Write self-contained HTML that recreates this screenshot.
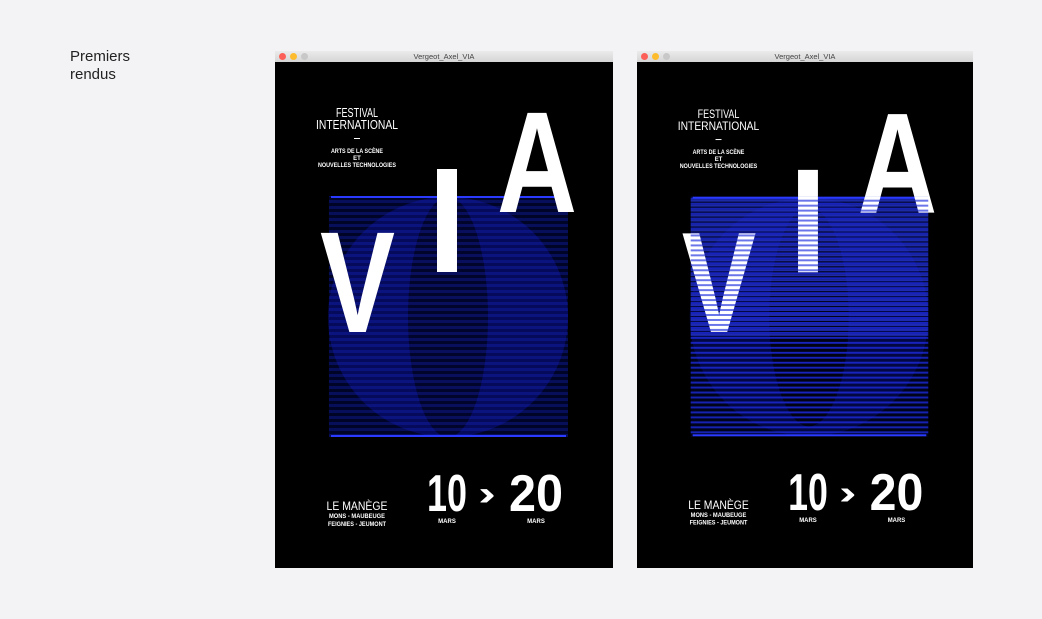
<!DOCTYPE html>
<html><head><meta charset="utf-8"><style>
html,body{margin:0;padding:0;background:#f3f3f5;width:1042px;height:619px;overflow:hidden;font-family:"Liberation Sans",sans-serif}
.lbl{position:absolute;left:70px;top:48px;font-size:15px;line-height:18px;color:#222}
.win{position:absolute;top:51px;height:517px;background:#000}
.bar{height:11px;background:linear-gradient(#ebebeb,#d5d5d5);position:relative;font-size:7.5px;line-height:11px;text-align:center;color:#444}
.d{position:absolute;top:2px;width:7px;height:7px;border-radius:50%}
svg{display:block}
</style></head><body>
<div class="lbl">Premiers<br>rendus</div>

<div class="win" style="left:275px;width:338px">
<div class="bar"><span class="d" style="left:4px;background:#fc5f57"></span><span class="d" style="left:15px;background:#fdbc2e"></span><span class="d" style="left:26px;background:#c8c8c8"></span>Vergeot_Axel_VIA</div>
<svg width="338" height="506" viewBox="0 0 338 506">
<defs>
<pattern id="st" width="10" height="6" patternUnits="userSpaceOnUse"><rect width="10" height="3" fill="#1a28d0" opacity="0.3"/></pattern>
<clipPath id="cc"><circle cx="173" cy="255" r="120"/></clipPath>
</defs>
<rect x="54" y="134" width="239" height="241" fill="#000528"/>
<circle cx="173" cy="255" r="120" fill="#0a129a" opacity="0.45"/>
<ellipse cx="173" cy="255" rx="40" ry="120" fill="#00041f" opacity="0.8" clip-path="url(#cc)"/>
<rect x="54" y="134" width="239" height="241" fill="url(#st)"/>
<rect x="56" y="134" width="235" height="2" fill="#2a3aff"/>
<rect x="56" y="373" width="235" height="2" fill="#2a3aff"/>
<g fill="#fff" font-family="'Liberation Sans',sans-serif" text-anchor="middle">
<text x="82" y="55" font-size="12.5" textLength="42" lengthAdjust="spacingAndGlyphs">FESTIVAL</text>
<text x="82" y="67" font-size="12.5" textLength="82" lengthAdjust="spacingAndGlyphs">INTERNATIONAL</text>
<rect x="79" y="76" width="6" height="1"/>
<text x="82" y="91" font-size="6" font-weight="bold" textLength="52" lengthAdjust="spacingAndGlyphs">ARTS DE LA SCÈNE</text>
<text x="82" y="98" font-size="6" font-weight="bold">ET</text>
<text x="82" y="105" font-size="6" font-weight="bold" textLength="78" lengthAdjust="spacingAndGlyphs">NOUVELLES TECHNOLOGIES</text>
<text x="82" y="448" font-size="12" textLength="61" lengthAdjust="spacingAndGlyphs">LE MANÈGE</text>
<text x="82" y="456" font-size="6.5" font-weight="bold" textLength="56" lengthAdjust="spacingAndGlyphs">MONS - MAUBEUGE</text>
<text x="82" y="464" font-size="6.5" font-weight="bold" textLength="58" lengthAdjust="spacingAndGlyphs">FEIGNIES - JEUMONT</text>
<text x="172" y="461" font-size="6" font-weight="bold">MARS</text>
<text x="261" y="461" font-size="6" font-weight="bold">MARS</text>
</g>
<g fill="#fff" font-family="'Liberation Sans',sans-serif" text-anchor="start">
<text x="152" y="449" font-size="52" font-weight="bold" textLength="40" lengthAdjust="spacingAndGlyphs">10</text>
<text x="203" y="443" font-size="34" font-weight="bold" textLength="18" lengthAdjust="spacingAndGlyphs">›</text>
<text x="234" y="449" font-size="52" font-weight="bold" textLength="54" lengthAdjust="spacingAndGlyphs">20</text>
<text x="45" y="270" font-size="144" font-weight="bold" textLength="75" lengthAdjust="spacingAndGlyphs">V</text>
<rect x="162" y="107" width="20" height="103"/>
<text x="222" y="150" font-size="144" font-weight="bold" textLength="80" lengthAdjust="spacingAndGlyphs">A</text>
</g>
</svg>
</div>

<div class="win" style="left:637px;width:336px">
<div class="bar"><span class="d" style="left:4px;background:#fc5f57"></span><span class="d" style="left:15px;background:#fdbc2e"></span><span class="d" style="left:26px;background:#c8c8c8"></span>Vergeot_Axel_VIA</div>
<svg width="336" height="506" viewBox="0 0 338 506">
<defs>
<pattern id="st2" width="10" height="5" patternUnits="userSpaceOnUse"><rect width="10" height="2" fill="#1f2ff0" opacity="0.7"/></pattern>
<pattern id="st3" width="10" height="5" patternUnits="userSpaceOnUse"><rect y="2" width="10" height="3" fill="#000" opacity="0.7"/></pattern>
<pattern id="st4" width="10" height="5" patternUnits="userSpaceOnUse"><rect y="2" width="10" height="2" fill="#2a3ae0" opacity="0.7"/></pattern>
</defs>
<rect x="54" y="134" width="239" height="241" fill="#00031c"/>
<circle cx="173" cy="255" r="120" fill="#0a14a0" opacity="0.3"/>
<rect x="54" y="134" width="239" height="241" fill="url(#st2)"/>
<ellipse cx="173" cy="255" rx="40" ry="110" fill="url(#st3)"/>
<rect x="56" y="134" width="235" height="2" fill="#2a3aff"/>
<rect x="56" y="373" width="235" height="2" fill="#2a3aff"/>
<g fill="#fff" font-family="'Liberation Sans',sans-serif" text-anchor="middle">
<text x="82" y="55" font-size="12.5" textLength="42" lengthAdjust="spacingAndGlyphs">FESTIVAL</text>
<text x="82" y="67" font-size="12.5" textLength="82" lengthAdjust="spacingAndGlyphs">INTERNATIONAL</text>
<rect x="79" y="76" width="6" height="1"/>
<text x="82" y="91" font-size="6" font-weight="bold" textLength="52" lengthAdjust="spacingAndGlyphs">ARTS DE LA SCÈNE</text>
<text x="82" y="98" font-size="6" font-weight="bold">ET</text>
<text x="82" y="105" font-size="6" font-weight="bold" textLength="78" lengthAdjust="spacingAndGlyphs">NOUVELLES TECHNOLOGIES</text>
<text x="82" y="448" font-size="12" textLength="61" lengthAdjust="spacingAndGlyphs">LE MANÈGE</text>
<text x="82" y="456" font-size="6.5" font-weight="bold" textLength="56" lengthAdjust="spacingAndGlyphs">MONS - MAUBEUGE</text>
<text x="82" y="464" font-size="6.5" font-weight="bold" textLength="58" lengthAdjust="spacingAndGlyphs">FEIGNIES - JEUMONT</text>
<text x="172" y="461" font-size="6" font-weight="bold">MARS</text>
<text x="261" y="461" font-size="6" font-weight="bold">MARS</text>
</g>
<g fill="#fff" font-family="'Liberation Sans',sans-serif" text-anchor="start">
<text x="152" y="449" font-size="52" font-weight="bold" textLength="40" lengthAdjust="spacingAndGlyphs">10</text>
<text x="203" y="443" font-size="34" font-weight="bold" textLength="18" lengthAdjust="spacingAndGlyphs">›</text>
<text x="234" y="449" font-size="52" font-weight="bold" textLength="54" lengthAdjust="spacingAndGlyphs">20</text>
<text x="45" y="270" font-size="144" font-weight="bold" textLength="75" lengthAdjust="spacingAndGlyphs">V</text>
<rect x="162" y="107" width="20" height="103"/>
<text x="222" y="150" font-size="144" font-weight="bold" textLength="80" lengthAdjust="spacingAndGlyphs">A</text>
</g>
<rect x="54" y="134" width="239" height="140" fill="url(#st4)"/>
</svg>
</div>
</body></html>
